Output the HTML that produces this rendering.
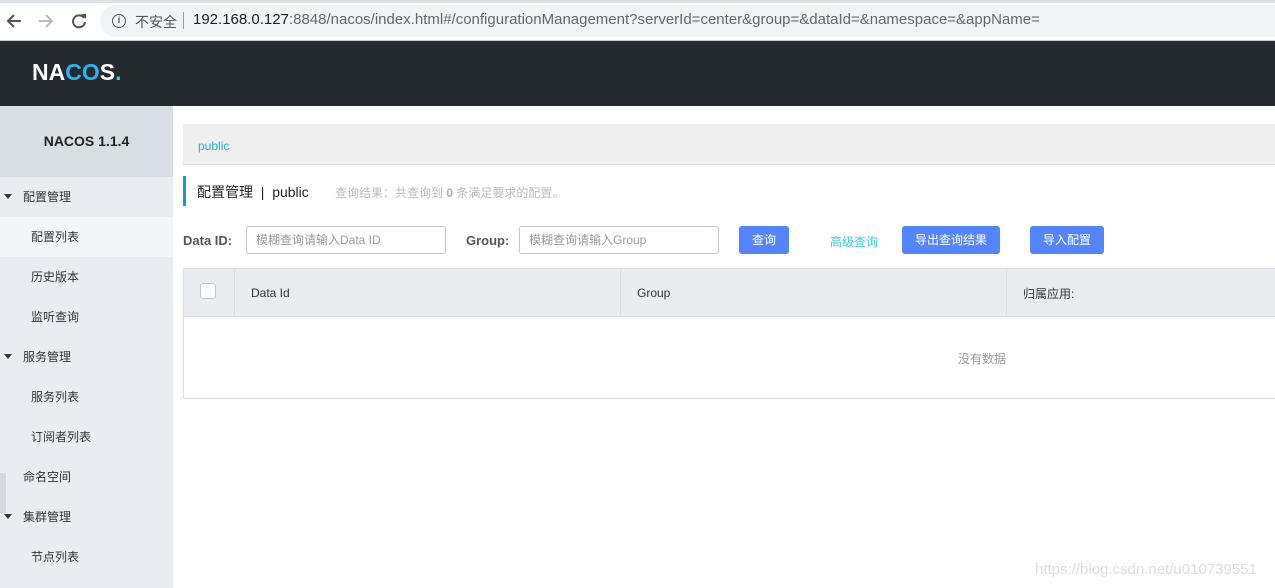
<!DOCTYPE html>
<html><head><meta charset="utf-8"><style>
*{box-sizing:border-box;margin:0;padding:0}
body{width:1275px;height:588px;overflow:hidden;background:#fff;font-family:"Liberation Sans","Noto Sans CJK SC",sans-serif;font-size:12px;color:#333;position:relative}
.abs{position:absolute}
.chrome{left:0;top:0;width:1275px;height:41px;background:#fff;border-top:3px solid #dee1e6;border-bottom:1px solid #ccc}
.url{left:100px;top:5px;width:1200px;height:32px;background:#f1f3f4;border-radius:16px}
.hdr{left:0;top:41px;width:1275px;height:65px;background:#252a2f}
.side{left:0;top:106px;width:173px;height:482px;background:#e9ecf0}
.ver{left:0;top:106px;width:173px;height:71px;background:#d9dde4;text-align:center;line-height:71px;font-weight:bold;font-size:14px;color:#222}
.it{position:absolute;left:0;width:173px;height:40px;line-height:40px;font-size:12px;color:#333}
.tri{position:absolute;left:4px;top:17px;border-left:4px solid transparent;border-right:4px solid transparent;border-top:5px solid #333}
.btn{position:absolute;top:226px;height:28px;background:#5584ff;color:#fff;border-radius:3px;text-align:center;line-height:28px;font-size:12px}
.inp{position:absolute;top:226px;height:28px;border:1px solid #c4c6cf;border-radius:3px;color:#999;padding-left:9px;line-height:26px;font-size:12px}
</style></head><body>
<div class="abs chrome"></div>
<div class="abs url"></div>
<svg class="abs" style="left:6px;top:13px" width="16" height="16" viewBox="0 0 16 16"><path d="M15 8H2M8 2L2 8l6 6" stroke="#555" stroke-width="2" fill="none"/></svg>
<svg class="abs" style="left:38px;top:13px" width="16" height="16" viewBox="0 0 16 16"><path d="M1 8h13M8 2l6 6-6 6" stroke="#bbb" stroke-width="2" fill="none"/></svg>
<svg class="abs" style="left:71px;top:13px" width="16" height="16" viewBox="0 0 16 16"><path d="M13 5A6 6 0 1 0 14 9" stroke="#555" stroke-width="2" fill="none"/><path d="M10 1h5v5z" fill="#555"/></svg>
<div class="abs" style="left:112px;top:14px;width:14px;height:14px;border:1.5px solid #555;border-radius:50%;font-size:9px;line-height:11px;text-align:center;color:#555;font-weight:bold">i</div>
<div class="abs" style="left:135px;top:12px;font-size:14px;color:#555">不安全</div>
<div class="abs" style="left:183px;top:12px;width:1px;height:17px;background:#999"></div>
<div class="abs" style="left:193px;top:11px;font-size:15px;color:#666;white-space:nowrap"><span style="color:#222">192.168.0.127</span>:8848/nacos/index.html#/configurationManagement?serverId=center&amp;group=&amp;dataId=&amp;namespace=&amp;appName=</div>
<div class="abs hdr"></div>
<div class="abs" style="left:32px;top:59px;font-size:23px;font-weight:bold;color:#fff">NA<span style="color:#2fb0f0">CO</span>S<span style="color:#2fd0e0">.</span></div>
<div class="abs side"></div>
<div class="abs ver">NACOS 1.1.4</div>
<div class="it" style="top:177px"><span class="tri"></span><span style="margin-left:23px">配置管理</span></div>
<div class="it" style="top:217px;background:#f3f5f7"><span style="margin-left:31px">配置列表</span></div>
<div class="it" style="top:257px"><span style="margin-left:31px">历史版本</span></div>
<div class="it" style="top:297px"><span style="margin-left:31px">监听查询</span></div>
<div class="it" style="top:337px"><span class="tri"></span><span style="margin-left:23px">服务管理</span></div>
<div class="it" style="top:377px"><span style="margin-left:31px">服务列表</span></div>
<div class="it" style="top:417px"><span style="margin-left:31px">订阅者列表</span></div>
<div class="it" style="top:457px"><span style="margin-left:23px">命名空间</span></div>
<div class="abs" style="left:0;top:473px;width:6px;height:40px;background:#d5d9e0"></div>
<div class="it" style="top:497px"><span class="tri"></span><span style="margin-left:23px">集群管理</span></div>
<div class="it" style="top:537px"><span style="margin-left:31px">节点列表</span></div>

<div class="abs" style="left:183px;top:124px;width:1092px;height:41px;background:#efefef;border-bottom:1px solid #ddd"></div>
<div class="abs" style="left:198px;top:139px;color:#1fb0d8;font-size:12px">public</div>
<div class="abs" style="left:183px;top:176px;width:3px;height:30px;background:#0f9bcc"></div>
<div class="abs" style="left:197px;top:182px;font-size:14px;color:#222">配置管理 &nbsp;|&nbsp; public</div>
<div class="abs" style="left:335px;top:184px;font-size:12px;color:#bbb">查询结果：共查询到 <b style="color:#aaa">0</b> 条满足要求的配置。</div>
<div class="abs" style="left:183px;top:233px;font-weight:bold;color:#555;font-size:13px">Data ID:</div>
<div class="inp" style="left:246px;width:200px">模糊查询请输入Data ID</div>
<div class="abs" style="left:466px;top:233px;font-weight:bold;color:#555;font-size:13px">Group:</div>
<div class="inp" style="left:519px;width:200px">模糊查询请输入Group</div>
<div class="btn" style="left:739px;width:50px">查询</div>
<div class="abs" style="left:830px;top:233px;color:#3cc8e0">高级查询</div>
<div class="btn" style="left:902px;width:98px">导出查询结果</div>
<div class="btn" style="left:1030px;width:74px">导入配置</div>

<div class="abs" style="left:183px;top:268px;width:1092px;height:131px;border:1px solid #dcdee3;border-right:none"></div>
<div class="abs" style="left:184px;top:269px;width:1091px;height:48px;background:#ebecf0;border-bottom:1px solid #dcdee3"></div>
<div class="abs" style="left:234px;top:269px;width:1px;height:48px;background:#dcdee3"></div>
<div class="abs" style="left:620px;top:269px;width:1px;height:48px;background:#dcdee3"></div>
<div class="abs" style="left:1006px;top:269px;width:1px;height:48px;background:#dcdee3"></div>
<div class="abs" style="left:200px;top:283px;width:16px;height:16px;background:#fff;border:1px solid #c4c6cf;border-radius:3px"></div>
<div class="abs" style="left:251px;top:286px;color:#333">Data Id</div>
<div class="abs" style="left:637px;top:286px;color:#333">Group</div>
<div class="abs" style="left:1023px;top:285px;color:#333">归属应用:</div>
<div class="abs" style="left:958px;top:350px;color:#999">没有数据</div>
<div class="abs" style="left:1035px;top:561px;font-size:15px;color:#ddd">https://blog.csdn.net/u010739551</div>
</body></html>
